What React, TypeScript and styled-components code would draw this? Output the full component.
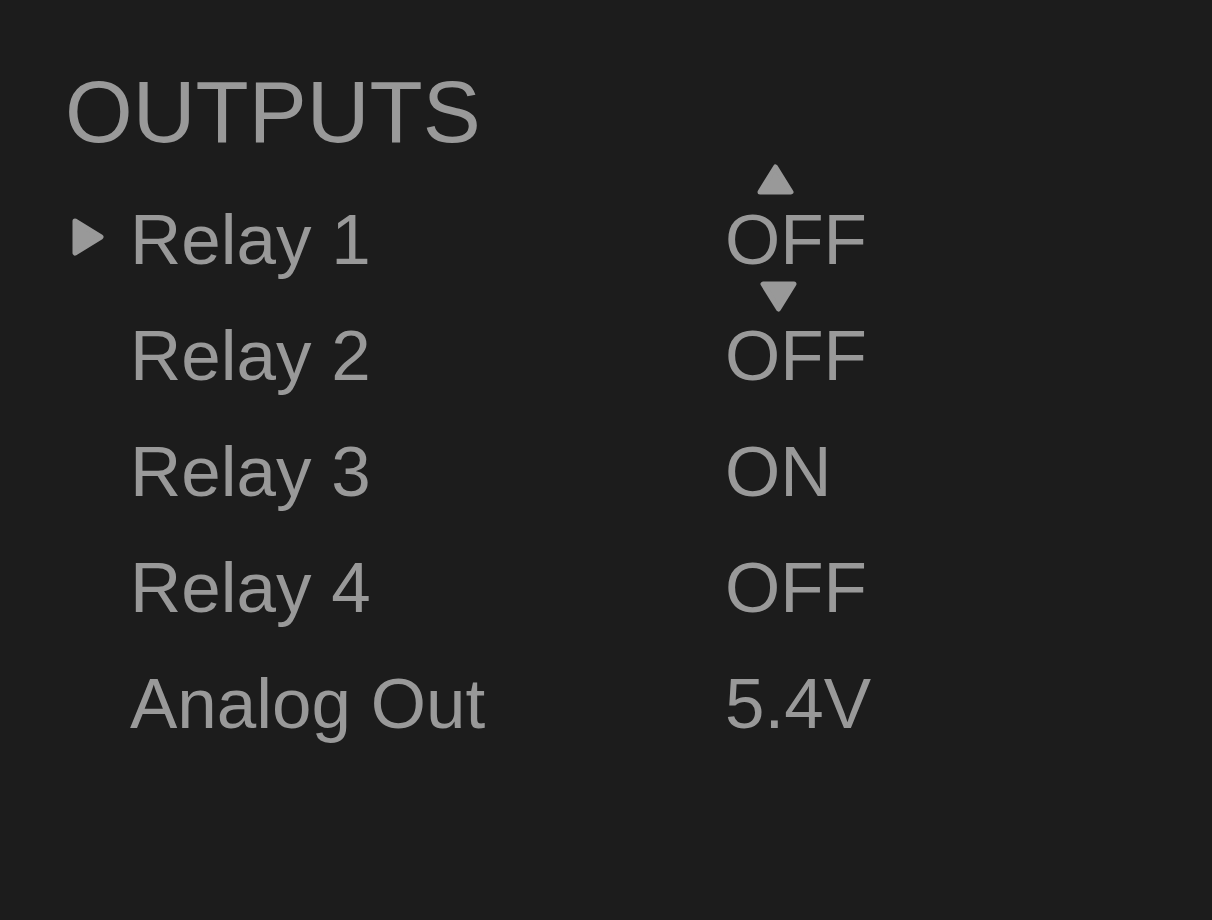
import styled, { createGlobalStyle } from "styled-components";

const GlobalStyle = createGlobalStyle`
  html, body {
    margin: 0;
    background: #1c1c1c;
  }
  body {
    font-family: "Liberation Sans", Arial, Helvetica, sans-serif;
    color: #999999;
  }
`;

const Screen = styled.div`
  box-sizing: border-box;
  width: 1212px;
  height: 920px;
  padding: 62px 0 0 62px;
  background: #1c1c1c;
  overflow: hidden;
`;

const Title = styled.h1`
  margin: 0 0 20px 3px;
  font-size: 87px;
  font-weight: 400;
  line-height: 100px;
  color: #999999;
`;

const Menu = styled.div`
  display: flex;
  flex-direction: column;
`;

const Row = styled.div`
  display: grid;
  grid-template-columns: 68px 595px 1fr;
  align-items: center;
  height: 116px;
  font-size: 71px;
  line-height: 116px;
`;

const Marker = styled.div`
  display: flex;
  align-items: center;
  padding-left: 10px;
  margin-top: -6px;
`;

const Label = styled.span`
  white-space: nowrap;
`;

const Value = styled.span`
  position: relative;
  white-space: nowrap;
`;

const Stepper = styled.svg<{ $dir: "up" | "down" }>`
  position: absolute;
  left: ${(p) => (p.$dir === "up" ? "32px" : "35px")};
  top: ${(p) => (p.$dir === "up" ? "-18px" : "98px")};
  width: 37px;
  height: 32px;
`;

const Tri = ({ dir }: { dir: "up" | "down" }) => (
  <Stepper $dir={dir} viewBox="0 0 37 32">
    <path
      d={dir === "up" ? "M18.5 3 L34 28 L3 28 Z" : "M3 4 L34 4 L18.5 29 Z"}
      fill="#999999"
      stroke="#999999"
      strokeWidth="5"
      strokeLinejoin="round"
    />
  </Stepper>
);

const Play = () => (
  <svg width="32" height="38" viewBox="0 0 32 38">
    <path d="M3 3 L29 19 L3 35 Z" fill="#999999" stroke="#999999" strokeWidth="5" strokeLinejoin="round" />
  </svg>
);

const items = [
  { label: "Relay 1", value: "OFF" },
  { label: "Relay 2", value: "OFF" },
  { label: "Relay 3", value: "ON" },
  { label: "Relay 4", value: "OFF" },
  { label: "Analog Out", value: "5.4V" },
];

export default function App() {
  const selected = 0;
  return (
    <>
      <GlobalStyle />
      <Screen>
        <Title>OUTPUTS</Title>
        <Menu>
          {items.map((it, i) => (
            <Row key={it.label}>
              <Marker>{i === selected ? <Play /> : null}</Marker>
              <Label>{it.label}</Label>
              <Value>
                {i === selected && <Tri dir="up" />}
                {it.value}
                {i === selected && <Tri dir="down" />}
              </Value>
            </Row>
          ))}
        </Menu>
      </Screen>
    </>
  );
}
